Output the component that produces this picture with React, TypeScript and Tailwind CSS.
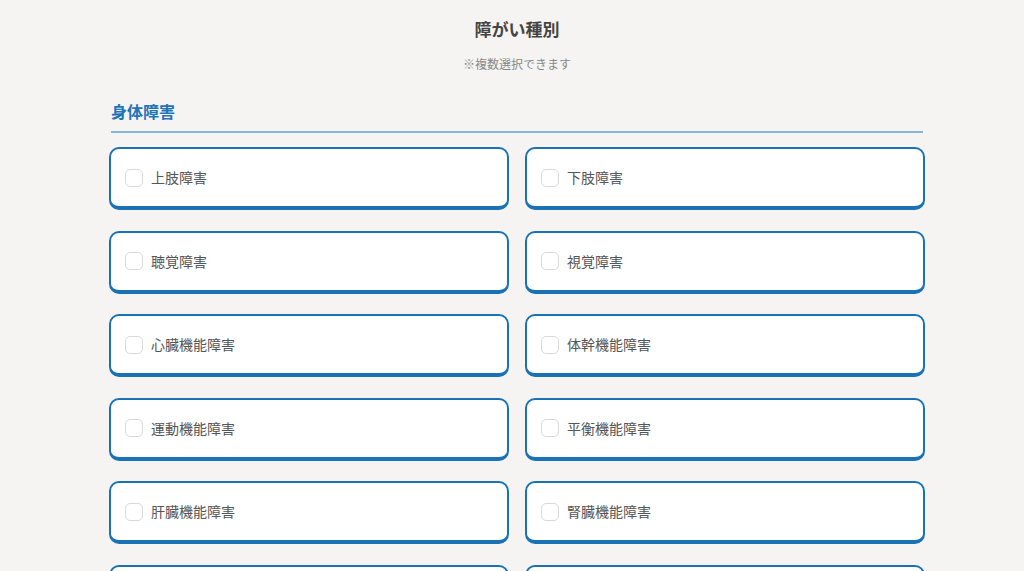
const items = [
  "上肢障害",
  "下肢障害",
  "聴覚障害",
  "視覚障害",
  "心臓機能障害",
  "体幹機能障害",
  "運動機能障害",
  "平衡機能障害",
  "肝臓機能障害",
  "腎臓機能障害",
  "呼吸器機能障害",
  "膀胱・直腸機能障害",
];

export default function App() {
  return (
    <div
      className="min-h-screen bg-[#f5f4f2] pl-[10px] flex justify-center"
      style={{ fontFamily: '"Noto Sans CJK JP", "Noto Sans", sans-serif' }}
    >
      <div className="w-[816px]">
        <h2 className="pt-[16px] text-center text-[17px] leading-[26px] font-bold text-[#444]">
          障がい種別
        </h2>
        <p className="mt-[13px] text-center text-[12px] leading-[18px] text-[#888]">
          ※複数選択できます
        </p>

        <h3 className="mt-[26px] px-[2px] text-[16px] leading-[24px] font-bold text-[#1f74b8]">
          身体障害
        </h3>
        <div className="mt-[8px] mx-[2px] h-[2px] bg-[#86b6d8]" />

        <div className="mt-[14px] grid grid-cols-2 gap-x-[16px] gap-y-[20.5px]">
          {items.map((label) => (
            <label
              key={label}
              className="flex h-[63px] items-center gap-[8px] rounded-[10px] border-2 border-b-4 border-[#1a72b5] bg-white px-[14px] cursor-pointer"
            >
              <span className="h-[18px] w-[18px] shrink-0 rounded-[5px] border border-[#d9d9d9] bg-white" />
              <span className="text-[14px] text-[#555]">{label}</span>
            </label>
          ))}
        </div>
      </div>
    </div>
  );
}
